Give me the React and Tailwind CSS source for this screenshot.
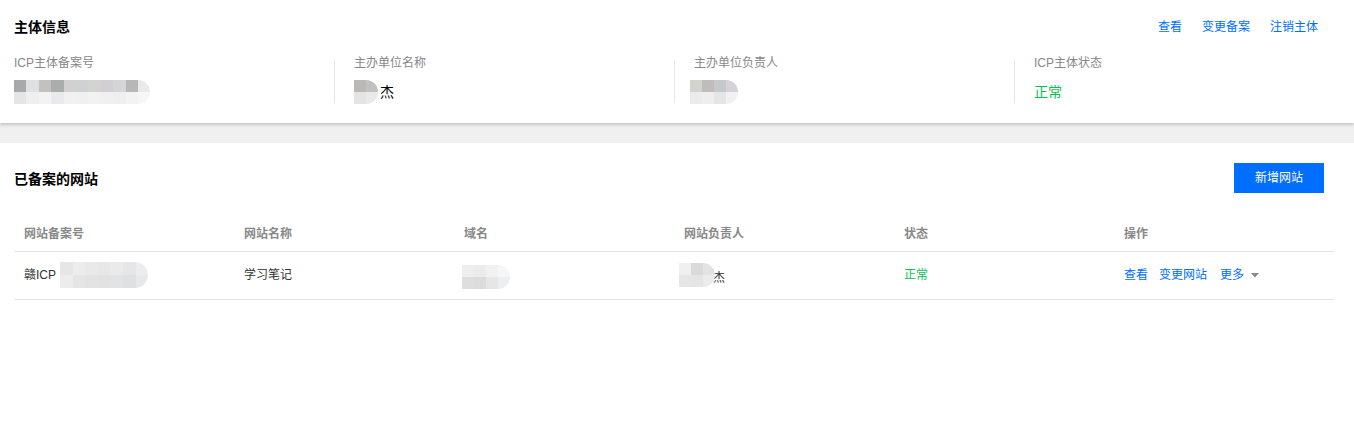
import { useState } from 'react';

const font = { fontFamily: '"Liberation Sans", "Noto Sans CJK SC", sans-serif' };

// blurred mosaic standing in for masked data
function Mosaic({ cols, top, bottom, cell = 12, className = '' }) {
  return (
    <span className={`inline-flex flex-col overflow-hidden rounded-r-full rounded-bl-xl align-middle ${className}`}>
      <span className="flex">
        {top.slice(0, cols).map((c, i) => (
          <span key={i} style={{ width: cell, height: cell, background: c }} />
        ))}
      </span>
      <span className="flex">
        {bottom.slice(0, cols).map((c, i) => (
          <span key={i} style={{ width: cell, height: cell, background: c }} />
        ))}
      </span>
    </span>
  );
}

const darkRow = ['#a9a8ab', '#dde1e2', '#c2c1c0', '#a9adac', '#d2d0d1', '#cfd2d1', '#d3d3d1', '#d1cfd4', '#d5d4d6', '#b8b7b8', '#e9eaec'];
const lightRow = ['#e5e5e6', '#efeef0', '#f4f3f4', '#e8eaeb', '#f1f1f2', '#eff0f1', '#f2f2f2', '#f1f0f1', '#efefef', '#f3f3f3', '#f7f7f8'];

function InfoCol({ label, children, first }) {
  return (
    <div className={`shrink-0 ${first ? 'w-[320px]' : 'w-[340px] border-l border-[#e5e5e5] pl-[19px]'}`}>
      <div className="text-xs leading-[14px] text-[#888] -mt-[4px]">{label}</div>
      <div className="mt-[10px] h-6 flex items-center text-sm text-[#000]">{children}</div>
    </div>
  );
}

export default function App() {
  const [open, setOpen] = useState(false);
  const headers = ['网站备案号', '网站名称', '域名', '网站负责人', '状态', '操作'];

  return (
    <div className="w-[1354px] h-[434px] bg-white overflow-hidden" style={font}>
      {/* 主体信息 */}
      <div className="bg-white h-[123px] relative z-10 shadow-[0_2px_3px_rgba(0,0,0,0.18)] px-[14px]">
        <div className="flex items-center justify-between h-[54px]">
          <h3 className="text-sm font-bold text-black">主体信息</h3>
          <div className="flex gap-5 text-xs text-[#006eff] pr-[22px]">
            <a>查看</a>
            <a>变更备案</a>
            <a>注销主体</a>
          </div>
        </div>
        <div className="flex h-[43px] mt-[6px]">
          <InfoCol label="ICP主体备案号" first>
            <Mosaic cols={11} top={darkRow} bottom={lightRow} cell={12.4} className="blur-[0.5px]" />
          </InfoCol>
          <InfoCol label="主办单位名称">
            <Mosaic cols={2} top={['#bcb8b5', '#bfc2c0']} bottom={['#e4e4e4', '#e9e9e9']} className="blur-[0.5px]" />
            <span className="ml-[2px]">杰</span>
          </InfoCol>
          <InfoCol label="主办单位负责人">
            <Mosaic cols={4} top={['#d3d3ce', '#bfbcb9', '#c4cacc', '#d6d0d7']} bottom={['#ebebeb', '#eeeeee', '#e3e6e8', '#f1f1f1']} className="blur-[0.5px] -ml-1" />
          </InfoCol>
          <InfoCol label="ICP主体状态">
            <span className="text-[#0abf5b]">正常</span>
          </InfoCol>
        </div>
      </div>

      <div className="h-[20px] bg-[#f0f0f0]" />

      {/* 已备案的网站 */}
      <div className="bg-white px-[14px] pt-[20px]">
        <div className="flex items-center justify-between pr-[16px] h-[30px]">
          <h3 className="text-sm font-bold text-black pt-[1px]">已备案的网站</h3>
          <button className="w-[90px] h-[30px] bg-[#006eff] text-white text-xs">新增网站</button>
        </div>

        <table className="mt-[23px] w-[1320px] table-fixed text-xs border-collapse">
          <thead>
            <tr className="border-b border-[#e5e5e5]">
              {headers.map((h) => (
                <th key={h} className="w-[220px] h-[35px] pl-[10px] pt-[1px] text-left font-bold text-[#888] align-middle">{h}</th>
              ))}
            </tr>
          </thead>
          <tbody>
            <tr className="border-b border-[#e5e5e5]">
              <td className="h-[48px] pl-[10px] text-[#333]">
                <span className="inline-flex items-center">
                  赣ICP
                  <Mosaic cols={7} top={['#e6e6e6', '#ececec', '#e9e9e9', '#e7e7e7', '#eaeaea', '#e6e6e8', '#ecedef']} bottom={['#ececec', '#e5e5e5', '#e3e3e3', '#e2e2e2', '#e2e3e3', '#dfe0e2', '#e8e8ea']} cell={12.6} className="blur-[0.5px] ml-[4px]" />
                </span>
              </td>
              <td className="pl-[10px] text-[#333]">学习笔记</td>
              <td className="pl-[8px]">
                <Mosaic cols={4} top={['#eeeeee', '#ebebeb', '#f1f1f1', '#f6f6f6']} bottom={['#dedede', '#dcdcdc', '#e6e6e6', '#ebeef2']} className="blur-[0.5px] mt-[4px]" />
              </td>
              <td className="pl-[5px] text-[#333]">
                <span className="inline-flex items-center">
                  <Mosaic cols={3} top={['#f0f0f0', '#dadada', '#e3e3e3']} bottom={['#e6e6e6', '#e5e5e5', '#ebebeb']} cell={12} className="blur-[0.5px] rounded-tl-xl" />
                  <span className="-ml-[2px] mt-[6px]">杰</span>
                </span>
              </td>
              <td className="pl-[10px] text-[#0abf5b]">正常</td>
              <td className="pl-[10px]">
                <div className="flex items-center text-[#006eff]">
                  <a>查看</a>
                  <a className="ml-[11px]">变更网站</a>
                  <button className="ml-[13px] flex items-center text-[#006eff]" onClick={() => setOpen(!open)}>
                    更多
                    <svg width="8" height="6" viewBox="0 0 8 6" className="ml-[7px]">
                      <path d="M0 1h8L4 5.5z" fill="#888" />
                    </svg>
                  </button>
                </div>
              </td>
            </tr>
          </tbody>
        </table>
      </div>
    </div>
  );
}
